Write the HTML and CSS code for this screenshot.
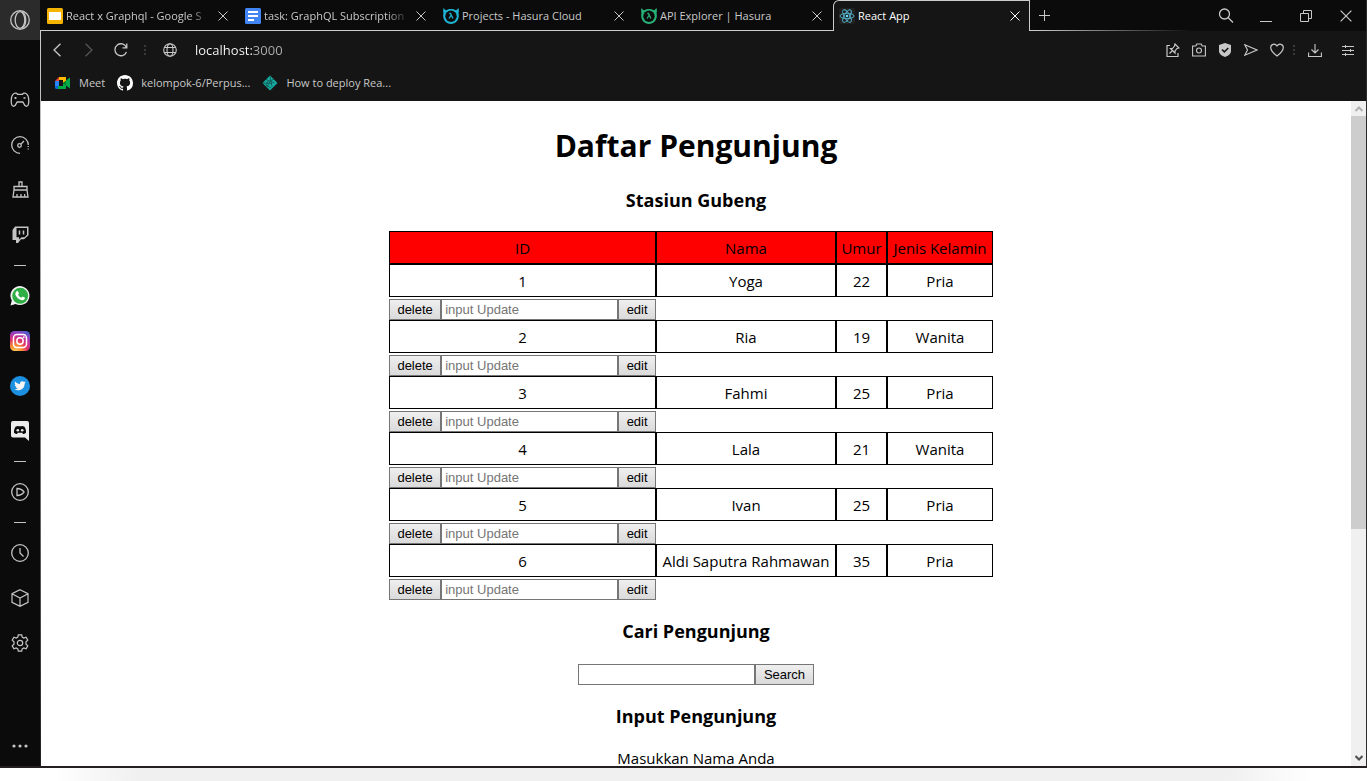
FILE: index.html
```html
<!DOCTYPE html>
<html lang="id">
<head>
<meta charset="utf-8">
<title>React App</title>
<link rel="stylesheet" href="styles.css">
</head>
<body>
<svg class="defs" width="0" height="0" aria-hidden="true">
  <symbol id="x" viewBox="0 0 10 10"><path d="M.5.5l9 9M9.500.5l-9 9" fill="none" stroke="currentColor"/></symbol>
  <symbol id="hasura" viewBox="0 0 16 16"><path d="M.5 0c1 1.200 1.700 1.800 2.700 2.300C6 .5 10 .5 12.800 2.300c1-.5 1.700-1.100 2.700-2.300.5 2 .5 3.500 0 5 1.500 5.500-2 11-7.500 11S-1 10.500.5 5C0 3.500 0 2 .5 0z" fill="currentColor"/><circle cx="8" cy="8.300" r="5.700" fill="#0b0b0b"/><path d="M6.300 5.500h1.200l2.400 5M8 7.500l-2 3" fill="none" stroke="currentColor" stroke-width="1.300"/></symbol>
</svg>
<div class="window">
  <nav class="sidebar" aria-label="Sidebar">
    <button class="side-logo" aria-label="Opera menu"><svg width="20" height="20" viewBox="0 0 20 20" fill="none" stroke="#c4c4c4" stroke-width="1.300"><circle cx="10" cy="10" r="9.300"/><ellipse cx="10" cy="10" rx="4.800" ry="8.300"/><path d="M12 1.500c5 3.500 5 13.500 0 17" /></svg></button>
    <button class="side-item" aria-label="GX Corner"><svg width="20" height="16" viewBox="0 0 20 16" fill="none" stroke="currentColor" stroke-width="1.300"><path d="M4 1.500C1.500 3 1 8 1.500 12c.5 3 3.500 3 4.500 0l1.200-2h5.600l1.200 2c1 3 4 3 4.500 0 .5-4 0-9-2.500-10.500-1.500-1-3 0-3.500.8H7.500C7 1.500 5.500.5 4 1.500z"/><path d="M4.500 6h2M5.500 5v2M13.500 6h2"/></svg></button>
    <button class="side-item" aria-label="GX Control"><svg width="18" height="18" viewBox="0 0 18 18" fill="none" stroke="currentColor" stroke-width="1.300"><path d="M9 17.300A8.300 8.300 0 1 1 17.300 9"/><path d="M17.200 10v5" stroke-dasharray="1 1.500"/><circle cx="8.500" cy="9.500" r="1.800"/><path d="M10 8l3-3"/></svg></button>
    <button class="side-item" aria-label="GX Cleaner"><svg width="17" height="17" viewBox="0 0 17 17" fill="none" stroke="currentColor" stroke-width="1.300"><path d="M7 5V1h3v4M2 9V5.500h13V9M2 9h13l1 7H1zM5 16v-3M9 16v-3M13 16l-.5-3"/></svg></button>
    <button class="side-item" aria-label="Twitch"><svg width="17" height="17" viewBox="0 0 17 17"><path d="M3 .5h13.500v8.800l-4.500 4H9L6 17H4v-3H.5V4z" fill="currentColor"/><path d="M4.500 2h10.500v6.700l-2.500 2.500H9.500L7 13.500v-2.300H4.500z" fill="#0b0b0b"/><path d="M7.500 4.500v4M11.500 4.500v4" stroke="currentColor" stroke-width="1.500"/></svg></button>
    <hr class="side-sep">
    <button class="side-item" aria-label="WhatsApp"><svg width="20" height="20" viewBox="0 0 20 20"><path d="M.5 19.500l1.300-5A9.500 9.500 0 1 1 5.500 18z" fill="#f2f2f2"/><circle cx="10.200" cy="9.800" r="8" fill="#2fae45"/><path d="M6.500 5.300l1.300-.3 1.200 2.600-.9 1.200c.8 1.500 1.700 2.300 3.200 3l1.200-1.200 2.500 1.200c0 2-1.700 2.700-3 2.400-3.800-.8-6.800-4-6.700-7z" fill="#fff"/></svg></button>
    <button class="side-item" aria-label="Instagram"><svg width="20" height="20" viewBox="0 0 20 20"><defs><radialGradient id="ig" cx=".25" cy="1.050" r="1.150"><stop offset="0" stop-color="#fed45e"/><stop offset=".3" stop-color="#f98b35"/><stop offset=".55" stop-color="#e1306c"/><stop offset=".8" stop-color="#a83ab5"/><stop offset="1" stop-color="#4b5fd2"/></radialGradient></defs><rect width="20" height="20" rx="4.500" fill="url(#ig)"/><g fill="none" stroke="#fff" stroke-width="1.500"><rect x="3.500" y="3.500" width="13" height="13" rx="3.500"/><circle cx="10" cy="10" r="3.200"/></g><circle cx="13.800" cy="6.200" r=".9" fill="#fff"/></svg></button>
    <button class="side-item" aria-label="Twitter"><svg width="20" height="20" viewBox="0 0 20 20"><circle cx="10" cy="10" r="10" fill="#1b90e0"/><path d="M15.800 6.300l-1.300.4c.5-.3.8-.7 1-1.200l-1.500.6c-1.700-1.700-4.300-.3-4 2-2 0-3.600-1-4.900-2.500-.8 1.200-.3 2.500.6 3.200l-1-.3c0 1.200.8 2 1.900 2.300h-1c.3.9 1.100 1.400 2.100 1.500-1 .8-2 1.100-3.300 1 4.500 2.700 10.300.1 10.200-5.500z" fill="#f4f4f4"/></svg></button>
    <button class="side-item" aria-label="Discord"><svg width="18" height="20" viewBox="0 0 18 20"><path d="M2 0h14a2 2 0 0 1 2 2v18l-4-3.500H2a2 2 0 0 1-2-2V2a2 2 0 0 1 2-2z" fill="#ececec"/><path d="M4.500 5.800C6 5 7 5 7.300 5.200h3.400c.3-.2 1.300-.2 2.800.6 1.200 2 1.700 4 1.500 6-1 1-2 1.200-3 1.200l-.7-1.200H6.700L6 13c-1 0-2-.2-3-1.200-.2-2 .3-4 1.500-6z" fill="#0b0b0b"/><circle cx="6.800" cy="9.200" r="1.300" fill="#ececec"/><circle cx="11.200" cy="9.200" r="1.300" fill="#ececec"/></svg></button>
    <hr class="side-sep">
    <button class="side-item" aria-label="Player"><svg width="18" height="18" viewBox="0 0 18 18" fill="none" stroke="currentColor" stroke-width="1.300"><circle cx="9" cy="9" r="8.300"/><path d="M6 5.500c3 0 5.500 1.500 7 3.500-1.500 2-4 3.500-7 3.500z"/></svg></button>
    <hr class="side-sep">
    <button class="side-item" aria-label="History"><svg width="18" height="18" viewBox="0 0 18 18" fill="none" stroke="currentColor" stroke-width="1.300"><circle cx="9" cy="9" r="8.300"/><path d="M9 4v5l3.500 3.500"/></svg></button>
    <button class="side-item" aria-label="Extensions"><svg width="18" height="18" viewBox="0 0 18 18" fill="none" stroke="currentColor" stroke-width="1.200"><path d="M9 .7l8 4v8.600l-8 4-8-4V4.700zM1 4.700l8 4.300 8-4.300M9 9v8"/></svg></button>
    <button class="side-item" aria-label="Settings"><svg width="18" height="18" viewBox="0 0 18 18" fill="none" stroke="currentColor" stroke-width="1.200"><path d="M7.300.8h3.400l.5 2.300 1.600.9 2.300-.8 1.700 3-1.800 1.600v2.400l1.800 1.600-1.700 3-2.300-.8-1.600.9-.5 2.300H7.300l-.5-2.300-1.600-.9-2.300.8-1.700-3L3 10.200V7.800L1.200 6.200l1.700-3 2.300.8 1.600-.9z"/><circle cx="9" cy="9" r="2.700"/></svg></button>
    <button class="side-more" aria-label="More"><svg width="16" height="4" viewBox="0 0 16 4" fill="currentColor"><circle cx="2" cy="2" r="1.600"/><circle cx="8" cy="2" r="1.600"/><circle cx="14" cy="2" r="1.600"/></svg></button>
  </nav>

  <div class="browser">
    <header class="chrome">
      <div class="tabs">
        <div class="tab"><svg width="16" height="16" viewBox="0 0 16 16"><rect width="16" height="16" rx="1.500" fill="#f5b400"/><path d="M2 4h12v8H2z" fill="#fff"/></svg><a class="tab-title fade" href="#">React x Graphql - Google S</a><button class="tab-close" aria-label="Close tab"><svg width="10" height="10"><use href="#x"/></svg></button></div>
        <div class="tab"><svg width="16" height="16" viewBox="0 0 16 16"><rect width="16" height="16" rx="1.500" fill="#4285f4"/><path d="M3 4h10M3 8h10M3 12h6" stroke="#fff" stroke-width="2"/></svg><a class="tab-title fade" href="#">task: GraphQL Subscription</a><button class="tab-close" aria-label="Close tab"><svg width="10" height="10"><use href="#x"/></svg></button></div>
        <div class="tab"><svg class="hasura-blue" width="16" height="16"><use href="#hasura"/></svg><a class="tab-title" href="#">Projects - Hasura Cloud</a><button class="tab-close" aria-label="Close tab"><svg width="10" height="10"><use href="#x"/></svg></button></div>
        <div class="tab"><svg class="hasura-green" width="16" height="16"><use href="#hasura"/></svg><a class="tab-title" href="#">API Explorer | Hasura</a><button class="tab-close" aria-label="Close tab"><svg width="10" height="10"><use href="#x"/></svg></button></div>
        <div class="tab active"><svg width="16" height="16" viewBox="0 0 16 16"><rect width="16" height="16" rx="2" fill="#222"/><g fill="none" stroke="#53b7d0" stroke-width=".9"><ellipse cx="8" cy="8" rx="7" ry="2.700"/><ellipse cx="8" cy="8" rx="7" ry="2.700" transform="rotate(60 8 8)"/><ellipse cx="8" cy="8" rx="7" ry="2.700" transform="rotate(120 8 8)"/></g><circle cx="8" cy="8" r="1.300" fill="#61dafb"/></svg><a class="tab-title" href="#">React App</a><button class="tab-close" aria-label="Close tab"><svg width="10" height="10"><use href="#x"/></svg></button></div>
        <button class="new-tab" aria-label="New tab"><svg width="12" height="12" viewBox="0 0 12 12"><path d="M5.500 0v11M0 5.500h11" stroke="currentColor"/></svg></button>
        <div class="window-controls">
          <button aria-label="Search tabs"><svg width="16" height="16" viewBox="0 0 16 16" fill="none" stroke="currentColor" stroke-width="1.300"><circle cx="6.500" cy="6" r="5"/><path d="M10 9.500l5 5"/></svg></button>
          <button aria-label="Minimize"><svg width="12" height="12" viewBox="0 0 12 12"><path d="M0 11.500h12" stroke="currentColor"/></svg></button>
          <button aria-label="Restore"><svg width="12" height="12" viewBox="0 0 12 12" fill="none" stroke="currentColor"><path d="M.5 3.500h8v8h-8zM3.500 3.500v-3h8v8h-3"/></svg></button>
          <button aria-label="Close"><svg width="12" height="12"><use href="#x"/></svg></button>
        </div>
      </div>
      <div class="toolbar">
        <button class="nav-btn" aria-label="Back"><svg width="8" height="14" viewBox="0 0 8 14" fill="none" stroke="currentColor" stroke-width="1.300"><path d="M7.500.7L1 7l6.500 6.300"/></svg></button>
        <button class="nav-btn dim" aria-label="Forward"><svg width="8" height="14" viewBox="0 0 8 14" fill="none" stroke="currentColor" stroke-width="1.300"><path d="M.5.7L7 7 .5 13.300"/></svg></button>
        <button class="nav-btn" aria-label="Reload"><svg width="14" height="14" viewBox="0 0 14 14" fill="none" stroke="currentColor" stroke-width="1.300"><path d="M12.500 9A6 6 0 1 1 12.500 4.500M12.800.5v4.300H8.500"/></svg></button>
        <span class="dots wide"></span>
        <svg class="globe" width="14" height="14" viewBox="0 0 14 14" fill="none" stroke="currentColor" stroke-width="1.100"><circle cx="7" cy="7" r="6.300"/><ellipse cx="7" cy="7" rx="3" ry="6.300"/><path d="M1.300 4.500h11.400M1.300 9.500h11.400"/></svg>
        <input class="address" type="text" value="localhost:3000" aria-label="Address">
        <button class="tool-btn" aria-label="Easy setup pin"><svg width="14" height="14" viewBox="0 0 14 14" fill="none" stroke="currentColor" stroke-width="1.200"><path d="M4 2.500H1v11h11V10M9 1l4 4-2 .5L9 8v2L4.500 5.500h2L8.500 3zM6.500 7.500L3.500 10.500"/></svg></button>
        <button class="tool-btn" aria-label="Snapshot"><svg width="14" height="14" viewBox="0 0 14 14" fill="none" stroke="currentColor" stroke-width="1.100"><path d="M.6 3h3.200l1-2h4.400l1 2h3.200v10H.6z"/><circle cx="7" cy="7.500" r="2.500"/></svg></button>
        <button class="tool-btn" aria-label="Ad blocker"><svg width="12" height="14" viewBox="0 0 12 14"><path d="M6 0l6 2v6c0 3-3 5-6 6-3-1-6-3-6-6V2z" fill="currentColor"/><path d="M3 6.500l2.300 2.300L9.300 5" fill="none" stroke="#151515" stroke-width="1.600"/></svg></button>
        <button class="tool-btn" aria-label="My Flow"><svg width="14" height="12" viewBox="0 0 14 12" fill="none" stroke="currentColor" stroke-width="1.100"><path d="M.8.8L13 6 .8 11.200 3.500 6z"/></svg></button>
        <button class="tool-btn" aria-label="Bookmark"><svg width="14" height="14" viewBox="0 0 14 14" fill="none" stroke="currentColor" stroke-width="1.200"><path d="M7 13C3 10 .7 7.500.7 4.500.7 1 5 0 7 3c2-3 6.300-2 6.300 1.500C13.300 7.500 11 10 7 13z"/></svg></button>
        <span class="dots"></span>
        <button class="tool-btn large" aria-label="Downloads"><svg width="14" height="13" viewBox="0 0 14 13" fill="none" stroke="currentColor" stroke-width="1.100"><path d="M7 0v8.500M3.500 5.500L7 9l3.500-3.500M.6 8.500v4h12.800v-4"/></svg></button>
        <button class="tool-btn large" aria-label="Easy setup"><svg width="12" height="11" viewBox="0 0 12 11" stroke="currentColor"><path d="M0 1.500h12M0 5.500h12M0 9.500h12M3.500 0v3M8.500 4v3M3.500 8v3"/></svg></button>
      </div>
      <div class="bookmarks">
        <a href="#"><svg width="16" height="12" viewBox="0 0 16 12"><path d="M0 4h4v4H0z" fill="#2684fc"/><path d="M0 8h3v4H1.500A1.500 1.500 0 0 1 0 10.500z" fill="#0066da"/><path d="M0 4l4-4v4z" fill="#ea4335"/><path d="M4 0h7v4l-3 2V3H4z" fill="#ffba00"/><path d="M0 4h4v5H0z" fill="#2684fc"/><path d="M3 9h5V6l3 2v4H3z" fill="#00ac47"/><path d="M8 6l3-2.500V8z" fill="#00832d"/><path d="M11 3.500L15 .5v11l-4-3z" fill="#00ac47"/></svg>Meet</a>
        <a href="#"><svg width="16" height="16" viewBox="0 0 16 16" fill="#fff"><path d="M8 0C3.580 0 0 3.580 0 8c0 3.540 2.290 6.530 5.470 7.590.4.070.55-.17.55-.38 0-.19-.01-.82-.01-1.490-2.010.37-2.530-.49-2.690-.94-.09-.23-.48-.94-.82-1.130-.28-.15-.68-.52-.01-.53.63-.01 1.080.58 1.230.82.72 1.210 1.870.87 2.330.66.07-.52.28-.87.51-1.070-1.780-.2-3.640-.89-3.640-3.950 0-.87.31-1.590.82-2.150-.08-.2-.36-1.020.08-2.120 0 0 .67-.21 2.200.82.64-.18 1.320-.27 2-.27s1.360.09 2 .27c1.530-1.040 2.200-.82 2.200-.82.44 1.100.16 1.920.08 2.120.51.56.82 1.270.82 2.150 0 3.070-1.870 3.750-3.650 3.950.29.25.54.73.54 1.480 0 1.070-.01 1.930-.01 2.200 0 .21.15.46.55.38A8 8 0 0 0 16 8c0-4.420-3.580-8-8-8z"/></svg>kelompok-6/Perpus...</a>
        <a href="#"><svg width="16" height="16" viewBox="0 0 16 16"><path d="M8 .5L15.500 8 8 15.500.5 8z" fill="#15aba0"/><path d="M4 4.500l8.500 3.500M1 8l9 .5M8 1.500l2 10M5 12l3-6 4-2M6 6l-2 4 5 3" fill="none" stroke="#12514e" stroke-width=".8"/></svg>How to deploy Rea...</a>
      </div>
    </header>

    <div class="viewport">
      <main class="page">
        <h1>Daftar Pengunjung</h1>
        <h3>Stasiun Gubeng</h3>
        <div class="table-wrap">
          <table class="visitors">
            <thead><tr><th>ID</th><th>Nama</th><th>Umur</th><th>Jenis Kelamin</th></tr></thead>
            <tbody>
              <tr><td>1</td><td>Yoga</td><td>22</td><td>Pria</td></tr>
              <tr class="actions"><td><div class="controls"><button>delete</button><input type="text" placeholder="input Update" aria-label="Update 1"><button>edit</button></div></td></tr>
              <tr><td>2</td><td>Ria</td><td>19</td><td>Wanita</td></tr>
              <tr class="actions"><td><div class="controls"><button>delete</button><input type="text" placeholder="input Update" aria-label="Update 2"><button>edit</button></div></td></tr>
              <tr><td>3</td><td>Fahmi</td><td>25</td><td>Pria</td></tr>
              <tr class="actions"><td><div class="controls"><button>delete</button><input type="text" placeholder="input Update" aria-label="Update 3"><button>edit</button></div></td></tr>
              <tr><td>4</td><td>Lala</td><td>21</td><td>Wanita</td></tr>
              <tr class="actions"><td><div class="controls"><button>delete</button><input type="text" placeholder="input Update" aria-label="Update 4"><button>edit</button></div></td></tr>
              <tr><td>5</td><td>Ivan</td><td>25</td><td>Pria</td></tr>
              <tr class="actions"><td><div class="controls"><button>delete</button><input type="text" placeholder="input Update" aria-label="Update 5"><button>edit</button></div></td></tr>
              <tr><td>6</td><td>Aldi Saputra Rahmawan</td><td>35</td><td>Pria</td></tr>
              <tr class="actions"><td><div class="controls"><button>delete</button><input type="text" placeholder="input Update" aria-label="Update 6"><button>edit</button></div></td></tr>
            </tbody>
          </table>
        </div>
        <h3>Cari Pengunjung</h3>
        <form class="controls search"><input type="text" aria-label="Cari Pengunjung"><button type="button">Search</button></form>
        <h3>Input Pengunjung</h3>
        <label class="field-label" for="nama">Masukkan Nama Anda</label>
        <div class="controls search"><input type="text" id="nama"></div>
      </main>
      <div class="scrollbar" aria-hidden="true">
        <svg class="arrow up" width="8" height="6" viewBox="0 0 8 6"><path d="M.5 5L4 1.500 7.500 5" fill="none" stroke="currentColor" stroke-width="2"/></svg>
        <div class="track"><div class="thumb"></div></div>
        <svg class="arrow" width="8" height="6" viewBox="0 0 8 6"><path d="M.5 1L4 4.500 7.500 1" fill="none" stroke="currentColor" stroke-width="2"/></svg>
      </div>
    </div>
  </div>
</div>
<div class="desk"></div>
</body>
</html>
```

FILE: styles.css
```css
* { box-sizing: border-box; }

body {
  margin: 0;
  height: 100vh;
  display: flex;
  flex-direction: column;
  overflow: hidden;
  background: #fff;
  font-family: "Open Sans", "Noto Sans", sans-serif;
}

button {
  border: 0;
  padding: 0;
  background: none;
  color: inherit;
  font: inherit;
}

a { color: inherit; text-decoration: none; }
svg { flex: none; display: block; }
.defs { position: absolute; }

.window {
  flex: 1;
  min-height: 0;
  display: flex;
  border-right: 1px solid #2b2b2b;
  border-bottom: 2px solid #231f20;
  background: #0b0b0b;
}

/* Sidebar */
.sidebar {
  flex: none;
  width: 41px;
  display: flex;
  flex-direction: column;
  color: #c4c4c4;
  background: linear-gradient(#0b0b0b 30px, #ccc 30px, #a0a0a0 40%, #231f20) right / 1px 100% no-repeat;
}

.sidebar button {
  display: flex;
  align-items: center;
  justify-content: center;
  width: 40px;
}

.side-logo { height: 40px; margin-bottom: 37px; background: #2b2b2b; }
.side-item { height: 45px; }
.side-sep { width: 12px; height: 1px; margin: 8px 14px 7px; border: 0; background: #c4c4c4; }
.side-more { height: 40px; margin-top: auto; }

/* Tabs */
.browser {
  flex: 1;
  min-width: 0;
  display: flex;
  flex-direction: column;
}

.chrome {
  flex: none;
  background: #151515;
  color: #c8c8c8;
  font-size: 11px;
  line-height: 16px;
}

.tabs {
  display: flex;
  height: 31px;
  background:
    linear-gradient(90deg, #ccc 75%, transparent 87%) bottom / 100% 1px no-repeat,
    #0b0b0b;
}

.tab {
  flex: 0 1 198px;
  min-width: 0;
  display: flex;
  align-items: center;
  gap: 3px;
  padding: 0 7px 0 6px;
}

.tab-title {
  flex: 1;
  min-width: 0;
  overflow: hidden;
  white-space: nowrap;
}

.tab-title.fade {
  -webkit-mask-image: linear-gradient(90deg, #000 85%, transparent);
  mask-image: linear-gradient(90deg, #000 85%, transparent);
}

.tab-close { width: 18px; display: flex; justify-content: center; }

.tab.active {
  flex-basis: 197px;
  padding: 0 5px;
  border: 1px solid #ccc;
  border-bottom: 0;
  border-top-left-radius: 6px;
  background: #151515;
  color: #fff;
}

.hasura-blue { color: #1eb4d4; }
.hasura-green { color: #27b179; }

.new-tab {
  width: 30px;
  display: flex;
  align-items: center;
  justify-content: center;
}

.window-controls { display: flex; margin-left: auto; }

.window-controls button {
  width: 40px;
  display: flex;
  align-items: center;
  justify-content: center;
}

/* Toolbar */
.toolbar {
  display: flex;
  align-items: center;
  height: 38px;
  padding-right: 2px;
}

.nav-btn, .tool-btn { display: flex; justify-content: center; }
.nav-btn { width: 32px; }
.nav-btn.dim { color: #555; }
.tool-btn { width: 26px; }
.tool-btn.large { width: 33px; }

.dots {
  width: 8px;
  height: 10px;
  background: repeating-linear-gradient(#3a3a3a 0 2px, transparent 2px 4px) center / 2px 100% no-repeat;
}

.dots.wide { width: 16px; }
.globe { margin: 0 10px; }

.address {
  flex: 1;
  min-width: 0;
  padding: 0;
  margin-left: 8px;
  border: 0;
  outline: 0;
  font: 13px/18px "Open Sans", "Noto Sans", sans-serif;
  color: transparent;
  background: linear-gradient(90deg, #fff 57px, #b0b0b0 57px);
  -webkit-background-clip: text;
  background-clip: text;
}

.bookmarks {
  display: flex;
  gap: 12px;
  padding: 0 14px 4px;
}

.bookmarks a {
  display: flex;
  align-items: center;
  gap: 8px;
  height: 28px;
  white-space: nowrap;
}

/* Page */
.viewport {
  flex: 1;
  min-height: 0;
  display: flex;
  background: #fff;
}

.page {
  flex: 1;
  min-width: 0;
  overflow: hidden;
  text-align: center;
  font-size: 15px;
  line-height: 22px;
  color: #000;
}

h1 { margin: 23px 0 21px; font-size: 30px; line-height: 43px; font-weight: 700; }
h3 { margin: 19px 0 18px; font-size: 18px; line-height: 25px; font-weight: 700; }

.table-wrap { padding-right: 10px; }

.visitors {
  margin: 0 auto;
  border-spacing: 0;
  font-weight: 400;
}

.visitors th, .visitors td {
  height: 33px;
  padding: 0 4px;
  border: 1px solid #000;
  font-weight: 400;
  white-space: nowrap;
}

.visitors th { background: #f00; }
.visitors th:nth-child(1) { width: 267px; }
.visitors th:nth-child(2) { width: 180px; }
.visitors th:nth-child(3) { width: 51px; }
.visitors th:nth-child(4) { width: 106px; }
.visitors .actions td { height: 23px; padding: 2px 0 0; border: 0; }

.controls { display: flex; }

.controls button, .controls input {
  height: 21px;
  border: 1px solid #767676;
  font: 13px/15px "Liberation Sans", Arial, sans-serif;
  color: #000;
}

.controls input { flex: none; width: 177px; padding: 1px 3px; background: #fff; }
.controls input::placeholder { color: #757575; }
.controls button { flex: 1 0 auto; padding: 0 7px; background: linear-gradient(#efefef, #dadada); }
.controls.search { justify-content: center; margin-top: 20px; }
.controls.search button { flex: none; padding: 0 8px; }
.field-label { display: block; }

/* Scrollbar */
.scrollbar {
  flex: none;
  width: 15px;
  display: flex;
  flex-direction: column;
  align-items: center;
  padding: 5px 0;
  background: #f0f0f0;
  color: #505050;
}

.arrow.up { color: #b0b0b0; }
.track { flex: 1; width: 100%; padding: 4px 0; }
.thumb { height: 65%; background: #cdcdcd; }

.desk {
  flex: none;
  height: 13px;
  background: linear-gradient(90deg, #fff 4%, #f0f0f0 10%, #f0f0f0 90%, #fff 96%);
}
```
